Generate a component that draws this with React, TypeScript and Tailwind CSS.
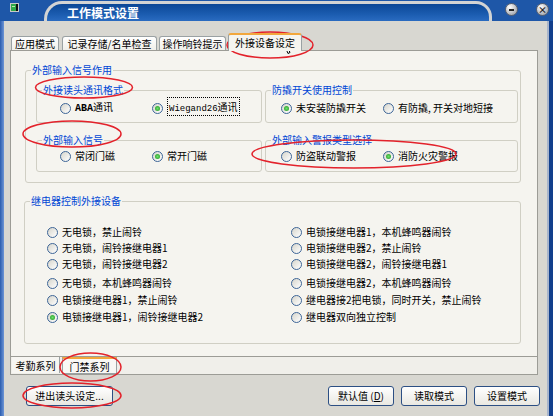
import React from 'react';

type OptionProps = { label: React.ReactNode; checked?: boolean; className?: string };

const Radio = ({ checked }: { checked?: boolean }) => (
  <span className="flex h-[11px] w-[11px] shrink-0 items-center justify-center rounded-full border border-[#3d6597] bg-[linear-gradient(135deg,#d6d5cc,#ffffff)]">
    {checked && <span className="h-[5px] w-[5px] rounded-full bg-[radial-gradient(circle,#6ee06e,#1b941b)]" />}
  </span>
);

const Option = ({ label, checked, className = '' }: OptionProps) => (
  <div className={`flex items-center gap-[4px] ${className}`}>
    <Radio checked={checked} />
    <span className="whitespace-nowrap leading-[12px]">{label}</span>
  </div>
);

const Group = ({ title, className = '', children }: { title: string; className?: string; children?: React.ReactNode }) => (
  <fieldset className={`rounded-[3px] border border-[#d0cfc4] ${className}`}>
    <legend className="ml-[5px] px-[1px] leading-[12px] text-[#0046d5]">{title}</legend>
    {children}
  </fieldset>
);

const relayLeft = [
  '无电锁，禁止闹铃',
  '无电锁，闹铃接继电器1',
  '无电锁，闹铃接继电器2',
  '无电锁，本机蜂鸣器闹铃',
  '电锁接继电器1，禁止闹铃',
  '电锁接继电器1，闹铃接继电器2',
];

const relayRight = [
  '电锁接继电器1，本机蜂鸣器闹铃',
  '电锁接继电器2，禁止闹铃',
  '电锁接继电器2，闹铃接继电器1',
  '电锁接继电器2，本机蜂鸣器闹铃',
  '继电器接2把电锁，同时开关，禁止闹铃',
  '继电器双向独立控制',
];

// spacing under each relay row (row 4 sits a bit lower in the original)
const rowGap = ['mt-0', 'mt-0', 'mt-0', 'mt-[3px]', 'mt-[1px]', 'mt-[1px]'];

const WinButton = ({ children }: { children: React.ReactNode }) => (
  <div className="flex h-[13px] w-[13px] items-center justify-center rounded-full border border-[#5a6270] bg-[radial-gradient(circle_at_35%_30%,#ffffff,#b9bcc2_60%,#8d929b)] text-[9px] font-bold leading-none text-[#222]">
    {children}
  </div>
);

const Btn = ({ children, className = '' }: { children: React.ReactNode; className?: string }) => (
  <button className={`flex h-[20px] items-center justify-center rounded-[3px] border border-[#2c4f84] bg-gradient-to-b from-white to-[#e9e8e2] text-[10px] leading-none text-black ${className}`}>
    {children}
  </button>
);

export default function App() {
  return (
    <div className="relative h-[416px] w-[553px] overflow-hidden bg-[#d8d7d1] font-['Noto_Sans_CJK_SC','Noto_Sans',sans-serif] text-[10px] text-black">
      {/* title bar */}
      <div className="flex h-[21px] bg-[#1e57a8]">
        <div className="w-[44px] pl-[10px] pt-[3px]">
          <svg width="9" height="9" viewBox="0 0 9 9">
            <rect x="0" y="0" width="9" height="9" fill="#c8c8c8" />
            <rect x="1" y="1" width="5" height="7" fill="#2fa84a" />
            <rect x="6" y="1" width="2" height="7" fill="#111" />
            <rect x="2" y="3" width="3" height="1" fill="#b9f2a0" />
          </svg>
        </div>
        <div className="mt-[1px] w-[448px] rounded-tl-[18px] rounded-tr-[16px] bg-[#d3d4d4] px-[3px] pt-[3px]">
          <div className="flex h-full items-center rounded-tl-[15px] rounded-tr-[13px] bg-[linear-gradient(180deg,#0b4796,#1b5cb0_60%,#2a6bc0)] pl-[20px] text-[12px] font-bold text-white">
            工作模式设置
          </div>
        </div>
        <div className="flex flex-1 items-start justify-end gap-[18px] pr-[4px] pt-[3px]">
          <WinButton>
            <span className="mt-[1px] block h-[2px] w-[5px] bg-[#222]" />
          </WinButton>
          <WinButton>×</WinButton>
        </div>
      </div>

      <div className="flex h-[395px]">
        <div className="w-[4px] bg-gradient-to-r from-[#2a5cae] to-[#6e96d6]" />
        <div className="flex-1">
          <div className="pl-[6px] pr-[9px] pt-[12px]">
            {/* top tabs */}
            <div className="relative z-10 flex h-[17px] items-end gap-[2px] pl-[1px]">
              <div className="flex h-[14px] w-[48px] items-center justify-center rounded-t-[3px] border border-b-0 border-[#9aa1a3] bg-gradient-to-b from-white to-[#f0efea]">应用模式</div>
              <div className="ml-[1px] flex h-[14px] w-[95px] items-center justify-center rounded-t-[3px] border border-b-0 border-[#9aa1a3] bg-gradient-to-b from-white to-[#f0efea]">记录存储/名单检查</div>
              <div className="flex h-[14px] w-[67px] items-center justify-center rounded-t-[3px] border border-b-0 border-[#9aa1a3] bg-gradient-to-b from-white to-[#f0efea]">操作响铃提示</div>
              <div className="-mb-[1px] flex h-[18px] w-[74px] items-center justify-center rounded-t-[3px] border border-b-0 border-[#9aa1a3] border-t-[2px] border-t-[#f2a73c] bg-[#f5f4ef] pb-[1px]">外接设备设定</div>
            </div>

            {/* main panel */}
            <div className="h-[307px] border border-[#9c9c96] bg-[#f5f4ef] pl-[14px] pt-[13px]">
              <Group title="外部输入信号作用" className="h-[119px] w-[496px]">
                <div className="grid grid-cols-[226px_253px] gap-x-[3px] gap-y-[11px] pl-[10px] pt-[8px]">
                  <Group title="外接读头通讯格式" className="h-[39px]">
                    <div className="flex h-[24px] items-center pl-[23px]">
                      <Option className="w-[92px]" label={<span className="font-['Liberation_Mono',monospace] text-[10px] font-bold">ABA<span className="font-['Noto_Sans_CJK_SC',sans-serif] font-normal">通讯</span></span>} />
                      <Option
                        checked
                        label={
                          <span className="border border-dotted border-black px-[1px] py-[1px]">
                            <span className="font-['Liberation_Mono',monospace] text-[9px]">Wiegand26</span>通讯
                          </span>
                        }
                      />
                    </div>
                  </Group>
                  <Group title="防撬开关使用控制" className="h-[39px]">
                    <div className="flex h-[24px] items-center pl-[15px]">
                      <Option className="w-[102px]" checked label="未安装防撬开关" />
                      <Option label="有防撬, 开关对地短接" />
                    </div>
                  </Group>
                  <Group title="外部输入信号" className="h-[38px]">
                    <div className="flex h-[20px] items-center pl-[23px]">
                      <Option className="w-[92px]" label="常闭门磁" />
                      <Option checked label="常开门磁" />
                    </div>
                  </Group>
                  <Group title="外部输入警报类型选择" className="h-[38px]">
                    <div className="flex h-[20px] items-center pl-[15px]">
                      <Option className="w-[102px]" label="防盗联动警报" />
                      <Option checked label="消防火灾警报" />
                    </div>
                  </Group>
                </div>
              </Group>

              <Group title="继电器控制外接设备" className="-ml-[1px] mt-[12px] h-[149px] w-[497px]">
                <div className="flex pl-[22px] pt-[17px]">
                  <div className="w-[244px]">
                    {relayLeft.map((t, i) => (
                      <Option key={t} className={`h-[16px] ${rowGap[i]}`} checked={i === 5} label={t} />
                    ))}
                  </div>
                  <div>
                    {relayRight.map((t, i) => (
                      <Option key={t} className={`h-[16px] ${rowGap[i]}`} label={t} />
                    ))}
                  </div>
                </div>
              </Group>
            </div>

            {/* bottom tabs */}
            <div className="flex h-[18px] border border-t-0 border-[#9c9c96] bg-[#f0efea] pl-[1px]">
              <div className="flex h-[16px] w-[48px] items-center justify-center border-r border-[#9aa1a3] bg-[#f7f6f2]">考勤系列</div>
              <div className="ml-[2px] flex h-[17px] w-[55px] items-center justify-center border-x border-b border-[#9aa1a3] border-t-[2px] border-t-[#f2a73c] bg-[#f9f8f5]">门禁系列</div>
            </div>
          </div>

          {/* buttons */}
          <div className="mt-[11px] flex justify-between pl-[22px] pr-[7px]">
            <Btn className="w-[87px]">进出读头设定...</Btn>
            <div className="flex gap-[7px]">
              <Btn className="w-[66px]">
                默认值 (<span className="underline">D</span>)
              </Btn>
              <Btn className="w-[66px]">读取模式</Btn>
              <Btn className="w-[66px]">设置模式</Btn>
            </div>
          </div>
        </div>
        <div className="w-[2px] bg-[#a7b4cb]" />
        <div className="w-[4px] bg-[#123f8c]" />
      </div>

      {/* mouse pointer over the selected tab */}
      <svg className="pointer-events-none absolute left-[282px] top-[37px]" width="11" height="18" viewBox="0 0 11 18">
        <path d="M0.5 0.5 L0.5 13.5 L3.5 10.5 L6 16.5 L8 15.5 L5.5 10 L9.5 10 Z" fill="#fff" stroke="#000" strokeWidth="1" />
      </svg>

      {/* red hand-drawn annotation rings */}
      <svg className="pointer-events-none absolute inset-0" width="553" height="416" viewBox="0 0 553 416">
        <g fill="none" stroke="#e3222b" strokeWidth="1.5">
          <ellipse cx="270" cy="45" rx="43" ry="13" />
          <ellipse cx="84" cy="87.5" rx="48.5" ry="10.5" />
          <ellipse cx="72" cy="134" rx="49" ry="13" />
          <ellipse cx="354" cy="154" rx="102" ry="14" />
          <ellipse cx="90.5" cy="367" rx="30.5" ry="14" />
          <ellipse cx="72" cy="395.5" rx="49" ry="12.5" />
        </g>
      </svg>
    </div>
  );
}
